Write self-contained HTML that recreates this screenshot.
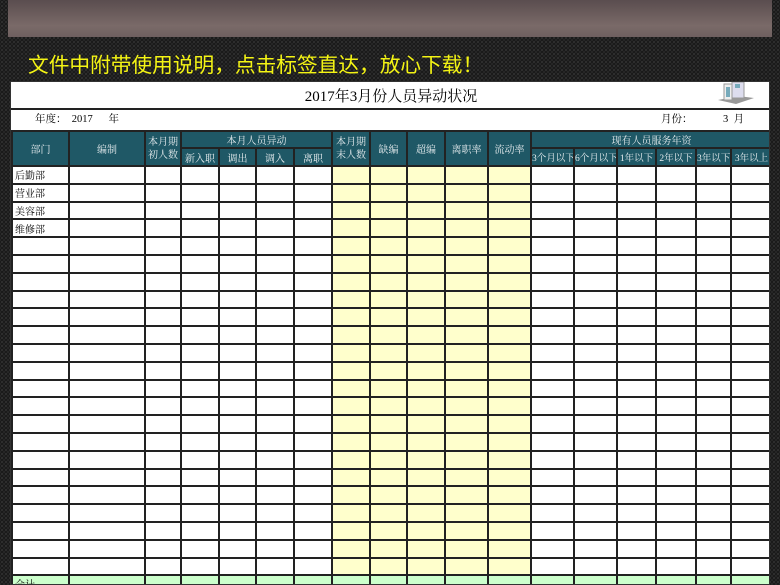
<!DOCTYPE html>
<html><head><meta charset="utf-8"><style>
*{margin:0;padding:0;box-sizing:border-box}
body{width:780px;height:585px;overflow:hidden;position:relative;background-color:#111;
background-image:radial-gradient(circle,#2e2e2e 1px,transparent 1.6px),radial-gradient(circle,#262626 1px,transparent 1.6px);
background-size:4px 4px;background-position:0 0,2px 2px;font-family:"Liberation Serif","Noto Serif CJK SC",serif}
.photo{position:absolute;left:8px;top:0;width:764px;height:37px;background:linear-gradient(180deg,#5a4d4f,#7a6a68 70%,#6f6060)}
.ad{position:absolute;left:28px;top:48px;font:20.7px "Liberation Sans","Noto Sans CJK SC",sans-serif;color:#f4f414;white-space:nowrap}
.sheet{position:absolute;left:10px;top:81px;width:760px;height:504px;background:#fff;overflow:hidden;border:1px solid #333}
table{border-collapse:collapse;table-layout:fixed;position:absolute;left:0;top:48px;width:760px}
td{border:2px solid #222;font-size:10px;color:#000;padding:0;text-align:center;vertical-align:middle;overflow:hidden;white-space:nowrap}
.h td{background:#1f5866;color:#e8eef0;font-size:10px}
.y{background:#ffffcc}
.g td{background:#ccffcc}
.l{text-align:left;padding-left:2px}
.title{position:absolute;left:0;top:0;width:760px;height:28px;border-bottom:2px solid #222;text-align:center;font-size:15px;line-height:31px}
.yr{position:absolute;left:0;top:28px;width:760px;height:21px;font-size:10.5px;line-height:20px}
</style></head><body>
<div class="photo"></div>
<div class="ad">文件中附带使用说明，点击标签直达，放心下载！</div>
<div class="sheet">
<div class="title">2017年3月份人员异动状况</div>
<svg style="position:absolute;left:705px;top:0" width="40" height="22" viewBox="0 0 40 22"><path d="M2 18 L20 22 L38 16 L22 14Z" fill="#999"/><rect x="8" y="2" width="8" height="16" fill="#eee" stroke="#999"/><rect x="16" y="0" width="12" height="16" fill="#dde" stroke="#999"/><rect x="10" y="5" width="4" height="10" fill="#7ab"/><rect x="19" y="2" width="5" height="4" fill="#7ab"/></svg>
<div class="yr"><span style="position:absolute;left:24px">年度：&nbsp;&nbsp;2017&nbsp;&nbsp;&nbsp;&nbsp;&nbsp;&nbsp;年</span><span style="position:absolute;left:650px">月份：</span><span style="position:absolute;left:712px">3&nbsp;&nbsp;月</span></div>
<table>
<colgroup><col style="width:57px"><col style="width:76px"><col style="width:36px"><col style="width:38px"><col style="width:37px"><col style="width:38px"><col style="width:38px"><col style="width:38px"><col style="width:37px"><col style="width:38px"><col style="width:43px"><col style="width:43px"><col style="width:43px"><col style="width:43px"><col style="width:39px"><col style="width:40px"><col style="width:35px"><col style="width:41px"></colgroup>
<tr class="h" style="height:17px"><td rowspan="2">部门</td><td rowspan="2">编制</td><td rowspan="2" style="line-height:13px">本月期<br>初人数</td><td colspan="4">本月人员异动</td><td rowspan="2" style="line-height:13px">本月期<br>末人数</td><td rowspan="2">缺编</td><td rowspan="2">超编</td><td rowspan="2">离职率</td><td rowspan="2">流动率</td><td colspan="6">现有人员服务年资</td></tr>
<tr class="h" style="height:18px"><td>新入职</td><td>调出</td><td>调入</td><td>离职</td><td style="font-size:9.5px">3个月以下</td><td style="font-size:9.5px">6个月以下</td><td style="font-size:9.5px">1年以下</td><td style="font-size:9.5px">2年以下</td><td style="font-size:9.5px">3年以下</td><td style="font-size:9.5px">3年以上</td></tr>
<tr style="height:17.8px"><td class="l">后勤部</td><td></td><td></td><td></td><td></td><td></td><td></td><td class="y"></td><td class="y"></td><td class="y"></td><td class="y"></td><td class="y"></td><td></td><td></td><td></td><td></td><td></td><td></td></tr>
<tr style="height:17.8px"><td class="l">营业部</td><td></td><td></td><td></td><td></td><td></td><td></td><td class="y"></td><td class="y"></td><td class="y"></td><td class="y"></td><td class="y"></td><td></td><td></td><td></td><td></td><td></td><td></td></tr>
<tr style="height:17.8px"><td class="l">美容部</td><td></td><td></td><td></td><td></td><td></td><td></td><td class="y"></td><td class="y"></td><td class="y"></td><td class="y"></td><td class="y"></td><td></td><td></td><td></td><td></td><td></td><td></td></tr>
<tr style="height:17.8px"><td class="l">维修部</td><td></td><td></td><td></td><td></td><td></td><td></td><td class="y"></td><td class="y"></td><td class="y"></td><td class="y"></td><td class="y"></td><td></td><td></td><td></td><td></td><td></td><td></td></tr>
<tr style="height:17.8px"><td></td><td></td><td></td><td></td><td></td><td></td><td></td><td class="y"></td><td class="y"></td><td class="y"></td><td class="y"></td><td class="y"></td><td></td><td></td><td></td><td></td><td></td><td></td></tr>
<tr style="height:17.8px"><td></td><td></td><td></td><td></td><td></td><td></td><td></td><td class="y"></td><td class="y"></td><td class="y"></td><td class="y"></td><td class="y"></td><td></td><td></td><td></td><td></td><td></td><td></td></tr>
<tr style="height:17.8px"><td></td><td></td><td></td><td></td><td></td><td></td><td></td><td class="y"></td><td class="y"></td><td class="y"></td><td class="y"></td><td class="y"></td><td></td><td></td><td></td><td></td><td></td><td></td></tr>
<tr style="height:17.8px"><td></td><td></td><td></td><td></td><td></td><td></td><td></td><td class="y"></td><td class="y"></td><td class="y"></td><td class="y"></td><td class="y"></td><td></td><td></td><td></td><td></td><td></td><td></td></tr>
<tr style="height:17.8px"><td></td><td></td><td></td><td></td><td></td><td></td><td></td><td class="y"></td><td class="y"></td><td class="y"></td><td class="y"></td><td class="y"></td><td></td><td></td><td></td><td></td><td></td><td></td></tr>
<tr style="height:17.8px"><td></td><td></td><td></td><td></td><td></td><td></td><td></td><td class="y"></td><td class="y"></td><td class="y"></td><td class="y"></td><td class="y"></td><td></td><td></td><td></td><td></td><td></td><td></td></tr>
<tr style="height:17.8px"><td></td><td></td><td></td><td></td><td></td><td></td><td></td><td class="y"></td><td class="y"></td><td class="y"></td><td class="y"></td><td class="y"></td><td></td><td></td><td></td><td></td><td></td><td></td></tr>
<tr style="height:17.8px"><td></td><td></td><td></td><td></td><td></td><td></td><td></td><td class="y"></td><td class="y"></td><td class="y"></td><td class="y"></td><td class="y"></td><td></td><td></td><td></td><td></td><td></td><td></td></tr>
<tr style="height:17.8px"><td></td><td></td><td></td><td></td><td></td><td></td><td></td><td class="y"></td><td class="y"></td><td class="y"></td><td class="y"></td><td class="y"></td><td></td><td></td><td></td><td></td><td></td><td></td></tr>
<tr style="height:17.8px"><td></td><td></td><td></td><td></td><td></td><td></td><td></td><td class="y"></td><td class="y"></td><td class="y"></td><td class="y"></td><td class="y"></td><td></td><td></td><td></td><td></td><td></td><td></td></tr>
<tr style="height:17.8px"><td></td><td></td><td></td><td></td><td></td><td></td><td></td><td class="y"></td><td class="y"></td><td class="y"></td><td class="y"></td><td class="y"></td><td></td><td></td><td></td><td></td><td></td><td></td></tr>
<tr style="height:17.8px"><td></td><td></td><td></td><td></td><td></td><td></td><td></td><td class="y"></td><td class="y"></td><td class="y"></td><td class="y"></td><td class="y"></td><td></td><td></td><td></td><td></td><td></td><td></td></tr>
<tr style="height:17.8px"><td></td><td></td><td></td><td></td><td></td><td></td><td></td><td class="y"></td><td class="y"></td><td class="y"></td><td class="y"></td><td class="y"></td><td></td><td></td><td></td><td></td><td></td><td></td></tr>
<tr style="height:17.8px"><td></td><td></td><td></td><td></td><td></td><td></td><td></td><td class="y"></td><td class="y"></td><td class="y"></td><td class="y"></td><td class="y"></td><td></td><td></td><td></td><td></td><td></td><td></td></tr>
<tr style="height:17.8px"><td></td><td></td><td></td><td></td><td></td><td></td><td></td><td class="y"></td><td class="y"></td><td class="y"></td><td class="y"></td><td class="y"></td><td></td><td></td><td></td><td></td><td></td><td></td></tr>
<tr style="height:17.8px"><td></td><td></td><td></td><td></td><td></td><td></td><td></td><td class="y"></td><td class="y"></td><td class="y"></td><td class="y"></td><td class="y"></td><td></td><td></td><td></td><td></td><td></td><td></td></tr>
<tr style="height:17.8px"><td></td><td></td><td></td><td></td><td></td><td></td><td></td><td class="y"></td><td class="y"></td><td class="y"></td><td class="y"></td><td class="y"></td><td></td><td></td><td></td><td></td><td></td><td></td></tr>
<tr style="height:17.8px"><td></td><td></td><td></td><td></td><td></td><td></td><td></td><td class="y"></td><td class="y"></td><td class="y"></td><td class="y"></td><td class="y"></td><td></td><td></td><td></td><td></td><td></td><td></td></tr>
<tr style="height:17.8px"><td></td><td></td><td></td><td></td><td></td><td></td><td></td><td class="y"></td><td class="y"></td><td class="y"></td><td class="y"></td><td class="y"></td><td></td><td></td><td></td><td></td><td></td><td></td></tr>
<tr class="g" style="height:18px"><td class="l" style="vertical-align:top">合计</td><td></td><td></td><td></td><td></td><td></td><td></td><td></td><td></td><td></td><td></td><td></td><td></td><td></td><td></td><td></td><td></td><td></td></tr>
</table>
</div>
</body></html>
